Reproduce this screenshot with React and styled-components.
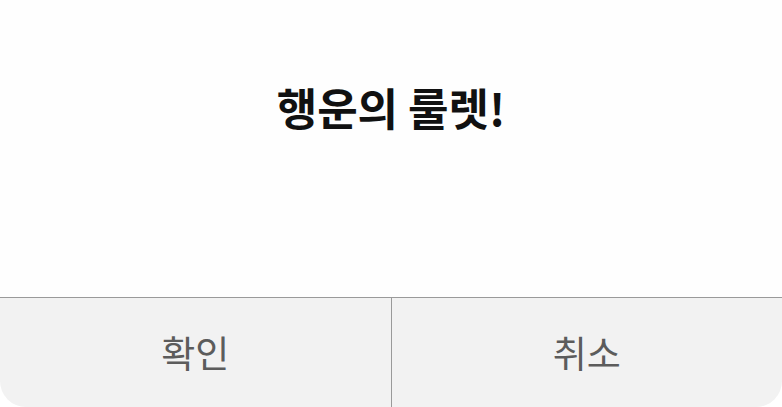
import React from 'react';
import styled, { createGlobalStyle } from 'styled-components';

const GlobalStyle = createGlobalStyle`
  html, body {
    margin: 0;
    padding: 0;
    background: #ffffff;
  }
  body {
    font-family: "Noto Sans CJK KR", "Noto Sans", sans-serif;
  }
`;

const Dialog = styled.div`
  display: flex;
  flex-direction: column;
  width: 782px;
  height: 407px;
  background: #fefefe;
  border-bottom-left-radius: 26px;
  border-bottom-right-radius: 26px;
  overflow: hidden;
`;

const Message = styled.div`
  flex: 0 0 298px;
  display: flex;
  align-items: flex-start;
  justify-content: center;
  padding-top: 75px;
  box-sizing: border-box;
  font-size: 44px;
  font-weight: 700;
  color: #111;
  border-bottom: 1px solid #9a9a9a;
`;

const Actions = styled.div`
  flex: 1;
  display: flex;
`;

const ActionButton = styled.button`
  flex: 1;
  display: flex;
  align-items: center;
  justify-content: center;
  border: none;
  border-left: ${(p) => (p.divider ? '1px solid #9a9a9a' : 'none')};
  background: #f2f2f2;
  font-family: inherit;
  font-size: 37px;
  font-weight: 400;
  color: #5c5c5c;
  padding: 0 0 2px;
  cursor: pointer;
`;

export default function App() {
  return (
    <>
      <GlobalStyle />
      <Dialog>
        <Message>행운의 룰렛!</Message>
        <Actions>
          <ActionButton>확인</ActionButton>
          <ActionButton divider>취소</ActionButton>
        </Actions>
      </Dialog>
    </>
  );
}
